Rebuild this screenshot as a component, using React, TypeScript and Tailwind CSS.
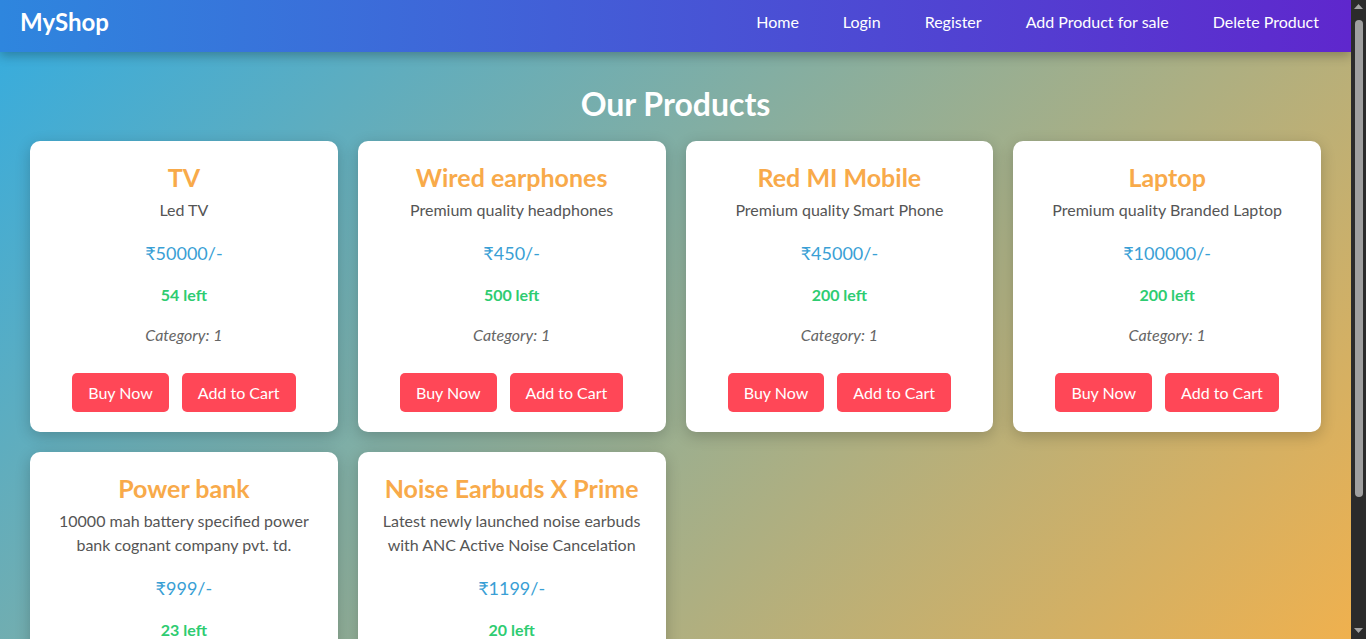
import React from 'react';

type Product = {
  name: string;
  description: string;
  price: number;
  stock: number;
  category: number;
};

const products: Product[] = [
  { name: 'TV', description: 'Led TV', price: 50000, stock: 54, category: 1 },
  { name: 'Wired earphones', description: 'Premium quality headphones', price: 450, stock: 500, category: 1 },
  { name: 'Red MI Mobile', description: 'Premium quality Smart Phone', price: 45000, stock: 200, category: 1 },
  { name: 'Laptop', description: 'Premium quality Branded Laptop', price: 100000, stock: 200, category: 1 },
  {
    name: 'Power bank',
    description: '10000 mah battery specified power bank cognant company pvt. td.',
    price: 999,
    stock: 23,
    category: 1,
  },
  {
    name: 'Noise Earbuds X Prime',
    description: 'Latest newly launched noise earbuds with ANC Active Noise Cancelation',
    price: 1199,
    stock: 20,
    category: 1,
  },
];

const navLinks = ['Home', 'Login', 'Register', 'Add Product for sale', 'Delete Product'];

const ProductCard = ({ product }: { product: Product }) => {
  return (
    <div className="bg-white rounded-[10px] shadow-[0_4px_15px_rgba(0,0,0,0.2)] px-5 pt-5 pb-5 flex flex-col items-center text-center">
      <h2 className="text-[25px] leading-[32px] font-bold text-[#f8aa4a]">{product.name}</h2>
      <p className="mt-[5px] text-[16px] leading-[24px] text-[#555]">{product.description}</p>
      <p className="mt-[17px] text-[18px] leading-[28px] text-[#3a9fd5]">₹{product.price}/-</p>
      <p className="mt-[16px] text-[16px] leading-[24px] font-bold text-[#2ecc71]">{product.stock} left</p>
      <p className="mt-[16px] text-[16px] leading-[24px] italic text-[#666]">Category: {product.category}</p>
      <div className="mt-[26px] flex gap-[13px]">
        <button className="bg-[#ff4757] text-white text-[16px] leading-[19px] px-4 py-[10px] rounded-[5px]">Buy Now</button>
        <button className="bg-[#ff4757] text-white text-[16px] leading-[19px] px-4 py-[10px] rounded-[5px]">Add to Cart</button>
      </div>
    </div>
  );
};

// dark page scrollbar, as the reference browser draws it
const Scrollbar = () => (
  <div className="w-[15px] h-screen bg-[#2b2b2b] flex flex-col items-center shrink-0">
    <svg width="9" height="6" viewBox="0 0 9 6" className="mt-[4px]">
      <path d="M4.5 0 L9 5 L0 5 Z" fill="#a3a3a3" />
    </svg>
    <div className="mt-[10px] w-2 h-[477px] rounded-full bg-[#9f9f9f]" />
    <div className="flex-1" />
    <svg width="9" height="6" viewBox="0 0 9 6" className="mb-[5px]">
      <path d="M0 0 L9 0 L4.5 5 Z" fill="#a3a3a3" />
    </svg>
  </div>
);

export default function App() {
  return (
    <div className="flex h-screen font-['Lato',sans-serif]">
      <div className="flex-1 h-screen overflow-y-scroll">
        <div className="min-h-full bg-[linear-gradient(135deg,#34ace0,#ffb142)] pb-10">
          <nav className="h-[52px] flex items-start justify-between pt-[10px] pl-5 pr-8 bg-[linear-gradient(to_right,#2e86de,#5f27cd)] shadow-[0_4px_10px_rgba(0,0,0,0.25)]">
            <div className="text-white text-[24px] leading-[24px] font-bold">MyShop</div>
            <div className="flex gap-[44px]">
              {navLinks.map((link) => (
                <a key={link} href="#" className="text-white text-[16px] leading-[24px]">
                  {link}
                </a>
              ))}
            </div>
          </nav>

          <h1 className="pt-[33px] mb-[18px] text-center text-white text-[32px] leading-[38px] font-bold">Our Products</h1>

          <div className="grid grid-cols-4 gap-5 px-[30px]">
            {products.map((p) => (
              <ProductCard key={p.name} product={p} />
            ))}
          </div>
        </div>
      </div>
      <Scrollbar />
    </div>
  );
}
